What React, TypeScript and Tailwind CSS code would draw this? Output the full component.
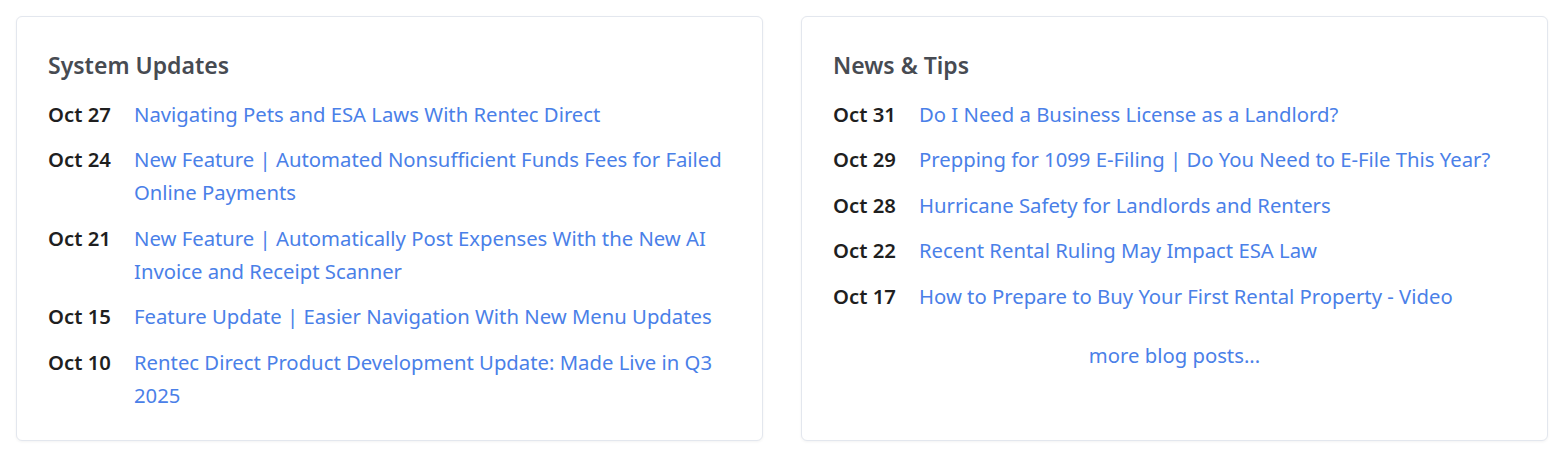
type Post = { date: string; title: string }

const systemUpdates: Post[] = [
  { date: 'Oct 27', title: 'Navigating Pets and ESA Laws With Rentec Direct' },
  { date: 'Oct 24', title: 'New Feature | Automated Nonsufficient Funds Fees for Failed Online Payments' },
  { date: 'Oct 21', title: 'New Feature | Automatically Post Expenses With the New AI Invoice and Receipt Scanner' },
  { date: 'Oct 15', title: 'Feature Update | Easier Navigation With New Menu Updates' },
  { date: 'Oct 10', title: 'Rentec Direct Product Development Update: Made Live in Q3 2025' },
]

const newsTips: Post[] = [
  { date: 'Oct 31', title: 'Do I Need a Business License as a Landlord?' },
  { date: 'Oct 29', title: 'Prepping for 1099 E-Filing | Do You Need to E-File This Year?' },
  { date: 'Oct 28', title: 'Hurricane Safety for Landlords and Renters' },
  { date: 'Oct 22', title: 'Recent Rental Ruling May Impact ESA Law' },
  { date: 'Oct 17', title: 'How to Prepare to Buy Your First Rental Property - Video' },
]

function PostList({ posts }: { posts: Post[] }) {
  return (
    <ul className="mt-[16.5px] flex flex-col gap-[12.5px]">
      {posts.map((p) => (
        <li key={p.date} className="flex text-[20.3px] leading-[33px]">
          <span className="w-[86px] shrink-0 font-semibold text-[#1f1f1f]">{p.date}</span>
          <a href="#" className="text-[#4a80e8] hover:underline">
            {p.title}
          </a>
        </li>
      ))}
    </ul>
  )
}

function Card({ title, children }: { title: string; children: React.ReactNode }) {
  return (
    <section className="flex-1 rounded-md border border-[#e3e7ee] bg-white px-[31px] pt-8 pb-7 shadow-[0_1px_3px_rgba(0,0,0,0.05)]">
      <h2 className="text-[23px] leading-[32px] font-semibold text-[#474b52]">{title}</h2>
      {children}
    </section>
  )
}

export default function App() {
  return (
    <div className="flex min-h-[453px] gap-[38px] bg-white pt-4 pr-[18px] pb-3 pl-4 font-['Noto_Sans',sans-serif]">
      <Card title="System Updates">
        <PostList posts={systemUpdates} />
      </Card>
      <Card title="News & Tips">
        <PostList posts={newsTips} />
        <div className="mt-[26px] text-center text-[20.3px] leading-[33px]">
          <a href="#" className="text-[#4a80e8] hover:underline">
            more blog posts...
          </a>
        </div>
      </Card>
    </div>
  )
}
